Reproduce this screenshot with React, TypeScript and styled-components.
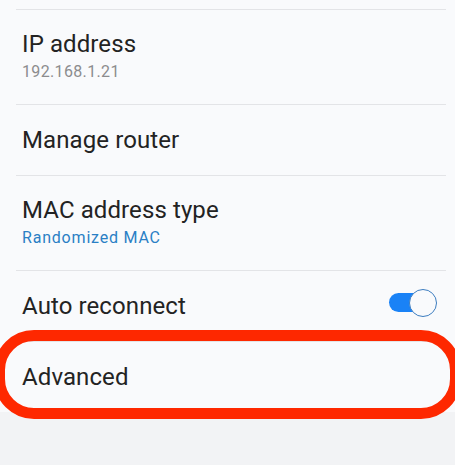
import React from 'react';
import styled, { createGlobalStyle } from 'styled-components';

const GlobalStyle = createGlobalStyle`
  html, body {
    margin: 0;
    padding: 0;
    background: #f2f3f5;
    overflow: hidden;
  }
  body {
    font-family: Roboto, "Noto Sans", "Liberation Sans", sans-serif;
  }
`;

const Page = styled.div`
  width: 455px;
  height: 465px;
  background: #f2f3f5;
  overflow: hidden;
`;

const List = styled.div`
  background: #f9fafc;
  padding-top: 9px;
`;

const Row = styled.div<{ $twoLine?: boolean }>`
  position: relative;
  display: flex;
  align-items: center;
  justify-content: space-between;
  box-sizing: border-box;
  min-height: ${({ $twoLine }) => ($twoLine ? '95px' : '71px')};
  padding: ${({ $twoLine }) => ($twoLine ? '19px 9px 22px 6px' : '0 9px 0 6px')};
  margin: 0 9px 0 16px;
  border-top: 1px solid #e3e4e7;
`;

const Texts = styled.div`
  display: flex;
  flex-direction: column;
  gap: 3px;
`;

const Title = styled.div`
  font-size: 24px;
  line-height: 30px;
  color: #232323;
  letter-spacing: 0.1px;
`;

const Sub = styled.div<{ $accent?: boolean }>`
  font-size: 16px;
  line-height: 20px;
  letter-spacing: ${({ $accent }) => ($accent ? '0.8px' : '0.35px')};
  color: ${({ $accent }) => ($accent ? '#2a7fc5' : '#8c8c8e')};
`;

const Switch = styled.div`
  position: relative;
  width: 48px;
  height: 29px;
  margin-top: -6px;
  flex-shrink: 0;
`;

const Track = styled.div`
  position: absolute;
  left: 0;
  right: 4px;
  top: 4px;
  height: 19px;
  border-radius: 10px;
  background: #1a82f6;
`;

const Knob = styled.div`
  position: absolute;
  right: 0;
  top: 0;
  width: 28px;
  height: 28px;
  box-sizing: border-box;
  border-radius: 50%;
  border: 1.5px solid #3d7dc0;
  background: #f9fafc;
`;

const Highlight = styled.div`
  position: absolute;
  left: -22px;
  right: -15px;
  top: -12px;
  bottom: -7px;
  border: 11px solid #fe2800;
  border-radius: 40px;
  pointer-events: none;
`;

const App: React.FC = () => {
  return (
    <Page>
      <GlobalStyle />
      <List>
        <Row $twoLine>
          <Texts>
            <Title>IP address</Title>
            <Sub>192.168.1.21</Sub>
          </Texts>
        </Row>
        <Row>
          <Title>Manage router</Title>
        </Row>
        <Row $twoLine>
          <Texts>
            <Title>MAC address type</Title>
            <Sub $accent>Randomized MAC</Sub>
          </Texts>
        </Row>
        <Row>
          <Title>Auto reconnect</Title>
          <Switch>
            <Track />
            <Knob />
          </Switch>
        </Row>
        <Row>
          <Title>Advanced</Title>
          <Highlight />
        </Row>
      </List>
    </Page>
  );
};

export default App;
